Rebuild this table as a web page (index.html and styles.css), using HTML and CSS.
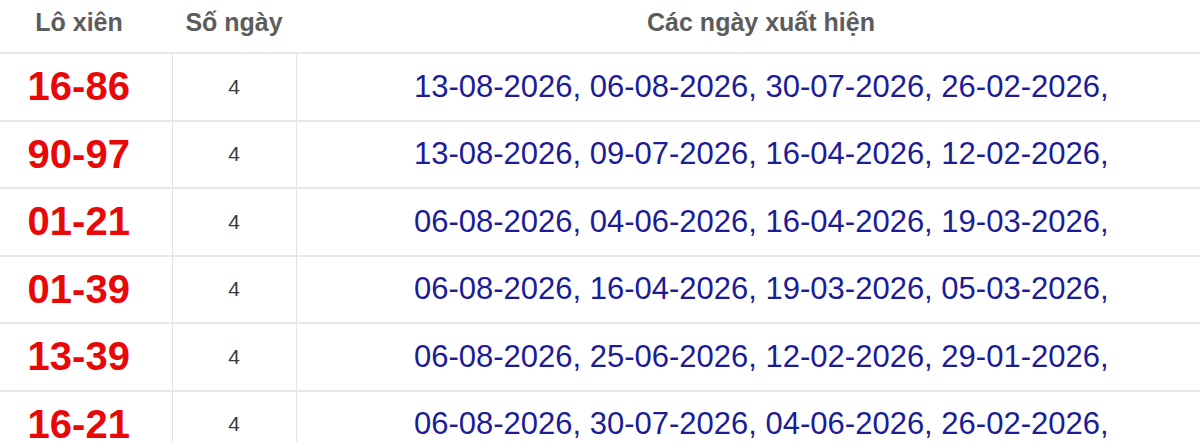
FILE: index.html
```html
<!DOCTYPE html>
<html lang="vi">
<head>
<meta charset="utf-8">
<title>Lô xiên</title>
<link rel="stylesheet" href="styles.css">
</head>
<body>
<table class="tbl">
  <colgroup>
    <col class="c1">
    <col class="c2">
    <col class="c3">
  </colgroup>
  <thead>
    <tr>
      <th>Lô xiên</th>
      <th>Số ngày</th>
      <th>Các ngày xuất hiện</th>
    </tr>
  </thead>
  <tbody>
    <tr>
      <td class="pair">16-86</td>
      <td class="count">4</td>
      <td class="dates">13-08-2026, 06-08-2026, 30-07-2026, 26-02-2026, </td>
    </tr>
    <tr>
      <td class="pair">90-97</td>
      <td class="count">4</td>
      <td class="dates">13-08-2026, 09-07-2026, 16-04-2026, 12-02-2026, </td>
    </tr>
    <tr>
      <td class="pair">01-21</td>
      <td class="count">4</td>
      <td class="dates">06-08-2026, 04-06-2026, 16-04-2026, 19-03-2026, </td>
    </tr>
    <tr>
      <td class="pair">01-39</td>
      <td class="count">4</td>
      <td class="dates">06-08-2026, 16-04-2026, 19-03-2026, 05-03-2026, </td>
    </tr>
    <tr>
      <td class="pair">13-39</td>
      <td class="count">4</td>
      <td class="dates">06-08-2026, 25-06-2026, 12-02-2026, 29-01-2026, </td>
    </tr>
    <tr>
      <td class="pair">16-21</td>
      <td class="count">4</td>
      <td class="dates">06-08-2026, 30-07-2026, 04-06-2026, 26-02-2026, </td>
    </tr>
  </tbody>
</table>
</body>
</html>
```

FILE: styles.css
```css
html, body {
  margin: 0;
  padding: 0;
  background: #ffffff;
  overflow: hidden;
}

body {
  font-family: "Liberation Sans", Arial, sans-serif;
}

.tbl {
  margin-left: -14px;
  width: 1240px;
  table-layout: fixed;
  border-collapse: collapse;
}

.c1 { width: 186px; }
.c2 { width: 124px; }
.c3 { width: 930px; }

.tbl th {
  font-size: 25px;
  font-weight: bold;
  color: #5c5c5c;
  line-height: 29px;
  padding: 8px 0 15px;
  text-align: center;
  border-bottom: 2px solid #e8e8e8;
}

.tbl td {
  height: 65.5px;
  padding: 0;
  text-align: center;
  vertical-align: middle;
  border-bottom: 2px solid #e8e8e8;
  border-left: 1px solid #e2e2e2;
}

.tbl td:first-child {
  border-left: none;
}

.pair {
  font-size: 40px;
  font-weight: bold;
  color: #e80808;
}

.count {
  font-size: 21px;
  color: #3a3a3a;
}

.dates {
  font-size: 31px;
  color: #1c1c96;
  white-space: nowrap;
}
```
